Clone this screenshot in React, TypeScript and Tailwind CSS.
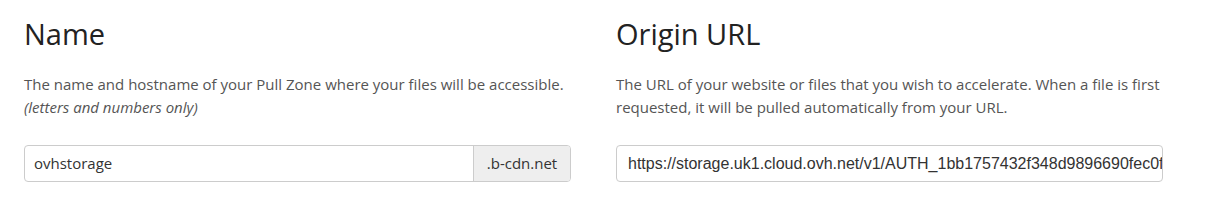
import React from "react";

export default function App() {
  return (
    <div className="w-[1207px] h-[214px] bg-white flex gap-[45px] pl-[24px] pt-[14px]" style={{ fontFamily: '"Open Sans", sans-serif' }}>
      <div className="w-[547px] flex flex-col">
        <h2 className="text-[29px] leading-[40px] text-[#222222] font-normal">Name</h2>
        <p className="mt-[19px] text-[15px] leading-[23px] text-[#555555]">
          The name and hostname of your Pull Zone where your files will be accessible.
          <br />
          <i>(letters and numbers only)</i>
        </p>
        <div className="mt-[26px] flex h-[37px] border border-[#cccccc] rounded-[4px] overflow-hidden">
          <div className="flex-1 flex items-center pl-[9px] text-[15px] text-[#333333]">ovhstorage</div>
          <div className="w-[97px] flex items-center justify-center bg-[#eeeeee] border-l border-[#cccccc] text-[15px] text-[#333333]">.b-cdn.net</div>
        </div>
      </div>
      <div className="w-[547px] flex flex-col">
        <h2 className="text-[29px] leading-[40px] text-[#222222] font-normal">Origin URL</h2>
        <p className="mt-[19px] text-[15px] leading-[23px] text-[#555555]">
          The URL of your website or files that you wish to accelerate. When a file is first requested, it will be pulled automatically from your URL.
        </p>
        <div className="mt-[26px] flex h-[37px] border border-[#cccccc] rounded-[4px] overflow-hidden">
          <div className="flex-1 flex items-center pl-[11px] pr-[2px] text-[16px] text-[#333333] whitespace-nowrap overflow-hidden" style={{ fontFamily: '"Liberation Sans", Arial, sans-serif' }}>
            https://storage.uk1.cloud.ovh.net/v1/AUTH_1bb1757432f348d9896690fec0f2
          </div>
        </div>
      </div>
    </div>
  );
}
